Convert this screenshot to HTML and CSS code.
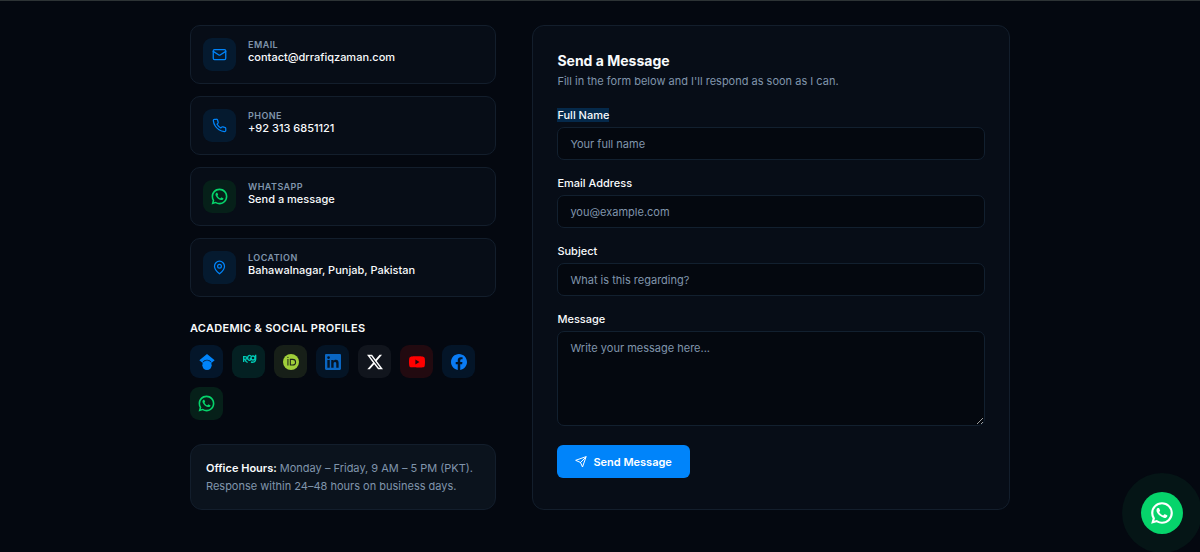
FILE: index.html
```html
<!DOCTYPE html>
<html lang="en">
<head>
  <meta charset="UTF-8" />
  <title>Contact - Dr Rafiq Zaman</title>
  <meta name="viewport" content="width=device-width, initial-scale=1.0" />
  <link rel="stylesheet" href="styles.css">
</head>
<body>

<!-- Shared icon shapes -->
<svg class="sprite" width="0" height="0" aria-hidden="true">
  <symbol id="whatsapp" viewBox="0 0 24 24">
    <path fill="currentColor" d="M7.254 18.494l.724.423A7.95 7.95 0 0 0 12 20a8 8 0 1 0-8-8c0 1.436.378 2.813 1.084 4.024l.423.724-.653 2.401 2.4-.655ZM2.005 22l1.352-4.968A9.95 9.95 0 0 1 2 12C2 6.477 6.477 2 12 2s10 4.477 10 10-4.477 10-10 10a9.95 9.95 0 0 1-5.03-1.355L2.005 22ZM8.392 7.308c.134-.01.268-.01.403-.004.054.004.108.01.162.016.159.018.334.115.393.249.298.676.588 1.357.868 2.04.062.151.025.347-.093.537-.06.097-.154.233-.263.372-.113.145-.356.411-.356.411s-.099.118-.061.265c.014.056.06.137.102.205l.059.095c.256.427.6.86 1.02 1.268.12.116.237.235.363.346.468.413.998.75 1.57 1l.257.111c.062.026.126.05.191.067.024.006.048.01.073.011.161.01.255-.094.295-.142.723-.876.79-.933.795-.933.095-.1.244-.135.378-.127.06.004.121.016.176.041.532.243 1.402.621 1.402.621l.581.262c.098.047.187.157.191.265.003.067.01.175-.014.373-.031.258-.11.57-.188.733-.055.115-.126.216-.209.302-.113.117-.196.187-.331.288l-.125.09c-.139.088-.217.131-.383.22-.257.136-.541.215-.833.23-.185.01-.37.023-.556.013-.008 0-.568-.087-.568-.087a9.45 9.45 0 0 1-3.84-2.046c-.226-.198-.435-.413-.649-.626-.889-.885-1.562-1.84-1.97-2.742A3.5 3.5 0 0 1 6.9 9.62c-.004-.607.195-1.198.565-1.68.073-.094.142-.193.261-.305.127-.12.207-.184.294-.228.115-.059.242-.09.372-.1Z"/>
  </symbol>
</svg>

<main class="contact">
  <section class="info">
    <div class="info-list">
      <a class="card info-card" href="mailto:contact@drrafiqzaman.com">
        <span class="icon-box blue">
          <svg class="line-icon" viewBox="0 0 24 24"><rect x="2" y="4" width="20" height="16" rx="2"/><path d="m22 7-8.97 5.7a1.94 1.94 0 0 1-2.06 0L2 7"/></svg>
        </span>
        <span class="info-text">
          <span class="info-label">Email</span>
          <span class="info-value">contact@drrafiqzaman.com</span>
        </span>
      </a>
      <a class="card info-card" href="tel:+923136851121">
        <span class="icon-box blue">
          <svg class="line-icon" viewBox="0 0 24 24"><path d="M22 16.92v3a2 2 0 0 1-2.18 2 19.79 19.79 0 0 1-8.63-3.07 19.5 19.5 0 0 1-6-6 19.79 19.79 0 0 1-3.07-8.67A2 2 0 0 1 4.11 2h3a2 2 0 0 1 2 1.72 12.84 12.84 0 0 0 .7 2.81 2 2 0 0 1-.45 2.11L8.09 9.91a16 16 0 0 0 6 6l1.27-1.27a2 2 0 0 1 2.11-.45 12.84 12.84 0 0 0 2.81.7A2 2 0 0 1 22 16.92z"/></svg>
        </span>
        <span class="info-text">
          <span class="info-label">Phone</span>
          <span class="info-value">+92 313 6851121</span>
        </span>
      </a>
      <a class="card info-card" href="https://wa.me/923136851121">
        <span class="icon-box green">
          <svg class="brand-icon"><use href="#whatsapp"/></svg>
        </span>
        <span class="info-text">
          <span class="info-label">WhatsApp</span>
          <span class="info-value">Send a message</span>
        </span>
      </a>
      <div class="card info-card">
        <span class="icon-box blue">
          <svg class="line-icon" viewBox="0 0 24 24"><path d="M20 10c0 6-8 12-8 12s-8-6-8-12a8 8 0 0 1 16 0Z"/><circle cx="12" cy="10" r="3"/></svg>
        </span>
        <span class="info-text">
          <span class="info-label">Location</span>
          <span class="info-value">Bahawalnagar, Punjab, Pakistan</span>
        </span>
      </div>
    </div>

    <h3 class="social-title">Academic &amp; Social Profiles</h3>
    <div class="socials">
      <a class="icon-box scholar" href="#" aria-label="Google Scholar">
        <svg class="brand-icon" viewBox="0 0 24 24"><path fill="#0084fa" d="M12 0 0.5 9.4 5 13.3a7.5 7.5 0 0 1 14 0l4.5-3.9z"/><circle cx="12" cy="17" r="7" fill="#0084fa"/><path d="M5 12h14l-1.4 2.6H6.4z" fill="#0084fa"/><path d="M5.4 14.2a7.2 7.2 0 0 1 13.2 0" fill="none" stroke="#0470d2" stroke-width="1"/></svg>
      </a>
      <a class="icon-box researchgate" href="#" aria-label="ResearchGate">
        <svg class="brand-icon" viewBox="0 0 24 24" fill="none" stroke="currentColor" stroke-width="2"><path d="M4 3v9M3 4h3c4 0 4 4 0 4H4m2 0c1 2 2 5 4 4M15 3c-3-2-5 0-5 3s3 5 5 2V7h-2"/><circle cx="18" cy="6" r="3"/><path d="M22 1v7c0 4-4 5-7 4"/></svg>
      </a>
      <a class="icon-box orcid" href="#" aria-label="ORCID">
        <svg class="brand-icon" viewBox="0 0 24 24"><circle cx="12" cy="12" r="12" fill="#a0cf3a"/><g fill="none" stroke="#1b2419" stroke-width="1.6"><path d="M7.4 7.4v9.8M11 8.1h3.4c6 0 6 8.5 0 8.5H11z"/></g><circle cx="7.4" cy="5" r="1" fill="#1b2419"/></svg>
      </a>
      <a class="icon-box linkedin" href="#" aria-label="LinkedIn">
        <svg class="brand-icon" viewBox="0 0 24 24"><path fill="currentColor" d="M20.447 20.452h-3.554v-5.569c0-1.328-.027-3.037-1.852-3.037-1.853 0-2.136 1.445-2.136 2.939v5.667H9.351V9h3.414v1.561h.046c.477-.9 1.637-1.85 3.37-1.85 3.601 0 4.267 2.37 4.267 5.455v6.286zM5.337 7.433a2.062 2.062 0 1 1 0-4.125 2.062 2.062 0 0 1 0 4.125zm1.782 13.019H3.555V9h3.564v11.452zM22.225 0H1.771C.792 0 0 .774 0 1.729v20.542C0 23.227.792 24 1.771 24h20.451C23.2 24 24 23.227 24 22.271V1.729C24 .774 23.2 0 22.222 0z"/></svg>
      </a>
      <a class="icon-box x" href="#" aria-label="X">
        <svg class="brand-icon" viewBox="0 0 24 24"><path fill="currentColor" d="M18.9 1.15h3.68l-8.04 9.19L24 22.85h-7.41l-5.8-7.59-6.64 7.59H.46l8.6-9.83L0 1.15h7.59l5.25 6.93zM17.61 20.64h2.04L6.49 3.24H4.3z"/></svg>
      </a>
      <a class="icon-box youtube" href="#" aria-label="YouTube">
        <svg class="brand-icon" viewBox="0 0 24 24"><path fill="currentColor" d="M23.498 6.186a3.016 3.016 0 0 0-2.122-2.136C19.505 3.545 12 3.545 12 3.545s-7.505 0-9.377.505A3.017 3.017 0 0 0 .502 6.186C0 8.07 0 12 0 12s0 3.93.502 5.814a3.016 3.016 0 0 0 2.122 2.136c1.871.505 9.376.505 9.376.505s7.505 0 9.377-.505a3.015 3.015 0 0 0 2.122-2.136C24 15.93 24 12 24 12s0-3.93-.502-5.814zM9.545 15.568V8.432L15.818 12l-6.273 3.568z"/></svg>
      </a>
      <a class="icon-box facebook" href="#" aria-label="Facebook">
        <svg class="brand-icon" viewBox="0 0 24 24"><path fill="currentColor" d="M24 12.073c0-6.627-5.373-12-12-12s-12 5.373-12 12c0 5.99 4.388 10.954 10.125 11.854v-8.385H7.078v-3.47h3.047V9.43c0-3.007 1.792-4.669 4.533-4.669 1.312 0 2.686.235 2.686.235v2.953H15.83c-1.491 0-1.956.925-1.956 1.874v2.25h3.328l-.532 3.47h-2.796v8.385C19.612 23.027 24 18.062 24 12.073z"/></svg>
      </a>
      <a class="icon-box green" href="#" aria-label="WhatsApp">
        <svg class="brand-icon large"><use href="#whatsapp"/></svg>
      </a>
    </div>

    <p class="card hours"><strong>Office Hours:</strong> Monday – Friday, 9 AM – 5 PM (PKT). Response within 24–48 hours on business days.</p>
  </section>

  <section class="card form-card">
    <h2>Send a Message</h2>
    <p class="subtitle">Fill in the form below and I'll respond as soon as I can.</p>
    <form>
      <div class="field">
        <label for="name"><span class="selected">Full Name</span></label>
        <input id="name" type="text" placeholder="Your full name" />
      </div>
      <div class="field">
        <label for="email">Email Address</label>
        <input id="email" type="email" placeholder="you@example.com" />
      </div>
      <div class="field">
        <label for="subject">Subject</label>
        <input id="subject" type="text" placeholder="What is this regarding?" />
      </div>
      <div class="field">
        <label for="message">Message</label>
        <textarea id="message" placeholder="Write your message here..."></textarea>
      </div>
      <button class="send-btn" type="submit">
        <svg viewBox="0 0 24 24"><path d="m22 2-7 20-4-9-9-4Z"/><path d="M22 2 11 13"/></svg>
        Send Message
      </button>
    </form>
  </section>
</main>

<a class="whatsapp-float" href="https://wa.me/923136851121" aria-label="Chat on WhatsApp">
  <svg><use href="#whatsapp"/></svg>
</a>

</body>
</html>
```
FILE: styles.css
```css
* {
  box-sizing: border-box;
}

body {
  margin: 0;
  background: #040810;
  color: #f8fafc;
  font-family: Inter, "Liberation Sans", sans-serif;
  font-size: 11px;
  line-height: 16px;
  border-top: 1px solid #2d3335;
}

h2, h3, p {
  margin: 0;
}

a {
  color: inherit;
  text-decoration: none;
}

.sprite {
  position: absolute;
}

.contact {
  display: grid;
  grid-template-columns: repeat(5, 1fr);
  gap: 36px;
  max-width: 856px;
  margin: 0 auto;
  padding: 24px 18px 41px;
}

.info {
  grid-column: span 2;
}

.card {
  background: #070d17;
  border: 1px solid #131e2c;
  border-radius: 10px;
}

.info-list {
  display: flex;
  flex-direction: column;
  gap: 12px;
}

.info-card {
  display: flex;
  gap: 12px;
  padding: 12px;
}

.info-text {
  display: flex;
  flex-direction: column;
}

.info-label {
  font-size: 9px;
  line-height: 13px;
  font-weight: 600;
  letter-spacing: 0.05em;
  text-transform: uppercase;
  color: #8095ac;
}

.info-value {
  line-height: 13px;
  font-weight: 500;
}

.icon-box {
  flex: none;
  display: flex;
  align-items: center;
  justify-content: center;
  width: 33px;
  height: 33px;
  border-radius: 9px;
}

.line-icon {
  width: 15px;
  height: 15px;
  fill: none;
  stroke: currentColor;
  stroke-width: 2;
  stroke-linecap: round;
  stroke-linejoin: round;
}

.brand-icon {
  width: 16px;
  height: 16px;
}

.info-card .brand-icon,
.brand-icon.large {
  width: 19px;
  height: 19px;
}

.blue { background: #051a2f; color: #0084fa; }
.green { background: #062019; color: #06d46b; }
.scholar { background: #04162a; }
.researchgate { background: #042022; color: #00c9b5; }
.orcid { background: #171f18; }
.linkedin { background: #041425; color: #0a66c2; }
.x { background: #11151d; color: #fff; }
.youtube { background: #220a10; color: #ff0000; }
.facebook { background: #041528; color: #0a7cf5; }

.social-title {
  margin: 23px 0 9px;
  font-size: 11px;
  font-weight: 600;
  letter-spacing: 0.025em;
  text-transform: uppercase;
}

.socials {
  display: flex;
  flex-wrap: wrap;
  gap: 9px;
}

.hours {
  margin-top: 24px;
  padding: 14px 15px;
  border-radius: 12px;
  background: #0b131d;
  line-height: 18px;
  color: #8095ac;
}

.hours strong {
  font-weight: 600;
  color: #f8fafc;
}

.form-card {
  grid-column: span 3;
  padding: 24px;
  border-radius: 12px;
}

.form-card h2 {
  font-size: 14px;
  line-height: 21px;
  font-weight: 700;
}

.subtitle {
  margin: 2px 0 18px;
  color: #8095ac;
}

.field {
  display: flex;
  flex-direction: column;
  gap: 4px;
  margin-bottom: 15px;
}

.field label {
  font-weight: 500;
}

.selected {
  background: #05294a;
}

input, textarea {
  width: 100%;
  padding: 8px 12px;
  font: inherit;
  color: inherit;
  background: #04080f;
  border: 1px solid #12202f;
  border-radius: 7px;
}

input {
  height: 33px;
}

textarea {
  display: block;
  height: 95px;
  resize: vertical;
}

input::placeholder, textarea::placeholder {
  color: #8095ac;
  opacity: 1;
}

.send-btn {
  display: flex;
  align-items: center;
  gap: 6px;
  height: 33px;
  margin-top: 19px;
  padding: 0 18px;
  border: none;
  border-radius: 6px;
  background: #0084fa;
  color: #fff;
  font: inherit;
  font-weight: 600;
  cursor: pointer;
}

.send-btn svg {
  width: 12px;
  height: 12px;
  fill: none;
  stroke: currentColor;
  stroke-width: 2;
  stroke-linecap: round;
  stroke-linejoin: round;
}

.whatsapp-float {
  position: fixed;
  right: 17px;
  bottom: 18px;
  display: flex;
  align-items: center;
  justify-content: center;
  width: 42px;
  height: 42px;
  border-radius: 50%;
  background: #06d46b;
  color: #fff;
  box-shadow: 0 0 0 19px #051516;
}

.whatsapp-float svg {
  width: 26px;
  height: 26px;
}

@media (max-width: 700px) {
  .info, .form-card {
    grid-column: 1 / -1;
  }
}
```
